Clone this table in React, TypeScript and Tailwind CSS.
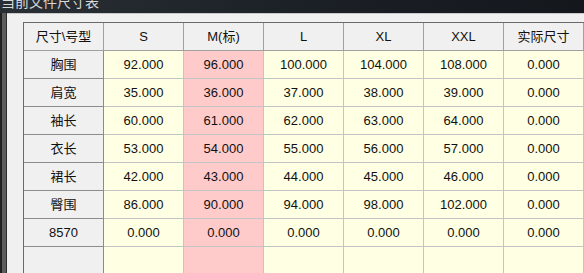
import React from "react";

const cols = ["尺寸\\号型", "S", "M(标)", "L", "XL", "XXL", "实际尺寸"];
const rows: [string, string[]][] = [
  ["胸围", ["92.000", "96.000", "100.000", "104.000", "108.000", "0.000"]],
  ["肩宽", ["35.000", "36.000", "37.000", "38.000", "39.000", "0.000"]],
  ["袖长", ["60.000", "61.000", "62.000", "63.000", "64.000", "0.000"]],
  ["衣长", ["53.000", "54.000", "55.000", "56.000", "57.000", "0.000"]],
  ["裙长", ["42.000", "43.000", "44.000", "45.000", "46.000", "0.000"]],
  ["臀围", ["86.000", "90.000", "94.000", "98.000", "102.000", "0.000"]],
  ["8570", ["0.000", "0.000", "0.000", "0.000", "0.000", "0.000"]],
];

const font = { fontFamily: '"Liberation Sans", "Noto Sans CJK SC", sans-serif' };

export default function App() {
  return (
    <div
      className="w-[584px] h-[273px] overflow-hidden bg-[#1b1f25] flex flex-col"
      style={font}
    >
      {/* title bar */}
      <div className="h-[13px] shrink-0 overflow-hidden bg-gradient-to-r from-[#2a2f36] via-[#1c2027] to-[#14171c] relative">
        <div className="absolute left-[1px] top-[-6px] text-[14px] leading-[16px] text-[#d8d8d8] whitespace-nowrap">
          当前文件尺寸表
        </div>
      </div>
      <div className="flex flex-1 min-h-0">
        {/* left frame */}
        <div className="w-[2px] bg-[#202020]" />
        <div className="w-[4px] bg-[#5c5c5c]" />
        <div className="w-[1px] bg-[#2c2c2c]" />
        {/* panel */}
        <div className="flex-1 bg-[#f0f0f0] border-t border-[#c8c8c8] pl-[16px] pt-[8px] overflow-hidden">
          <div className="border-t border-l border-[#6a6a6a] w-[600px] h-[300px] flex flex-col text-[13px] text-[#111]">
            {/* header */}
            <div className="flex h-[28px] shrink-0">
              {cols.map((c, i) => (
                <div
                  key={i}
                  className="w-[80px] shrink-0 h-[28px] flex items-center justify-center bg-[#f0f0f0] border-r border-b border-[#a0a0a0]"
                >
                  {c}
                </div>
              ))}
            </div>
            {rows.map(([label, vals], r) => (
              <div key={r} className="flex h-[28px] shrink-0">
                <div className="w-[80px] shrink-0 h-[28px] flex items-center justify-center bg-[#f0f0f0] border-r border-b border-[#8c8c8c]">
                  {label}
                </div>
                {vals.map((v, i) => (
                  <div
                    key={i}
                    className={
                      "w-[80px] shrink-0 h-[28px] flex items-center justify-center border-r border-b border-[#c4c4c4] " +
                      (i === 1 ? "bg-[#ffcaca]" : "bg-[#ffffe3]")
                    }
                  >
                    {v}
                  </div>
                ))}
              </div>
            ))}
            {/* empty filler row */}
            <div className="flex flex-1">
              <div className="w-[80px] shrink-0 bg-[#f0f0f0] border-r border-[#8c8c8c]" />
              {[0, 1, 2, 3, 4, 5].map((i) => (
                <div
                  key={i}
                  className={
                    "w-[80px] shrink-0 border-r border-[#c4c4c4] " +
                    (i === 1 ? "bg-[#ffcaca]" : "bg-[#ffffe3]")
                  }
                />
              ))}
            </div>
          </div>
        </div>
      </div>
    </div>
  );
}
